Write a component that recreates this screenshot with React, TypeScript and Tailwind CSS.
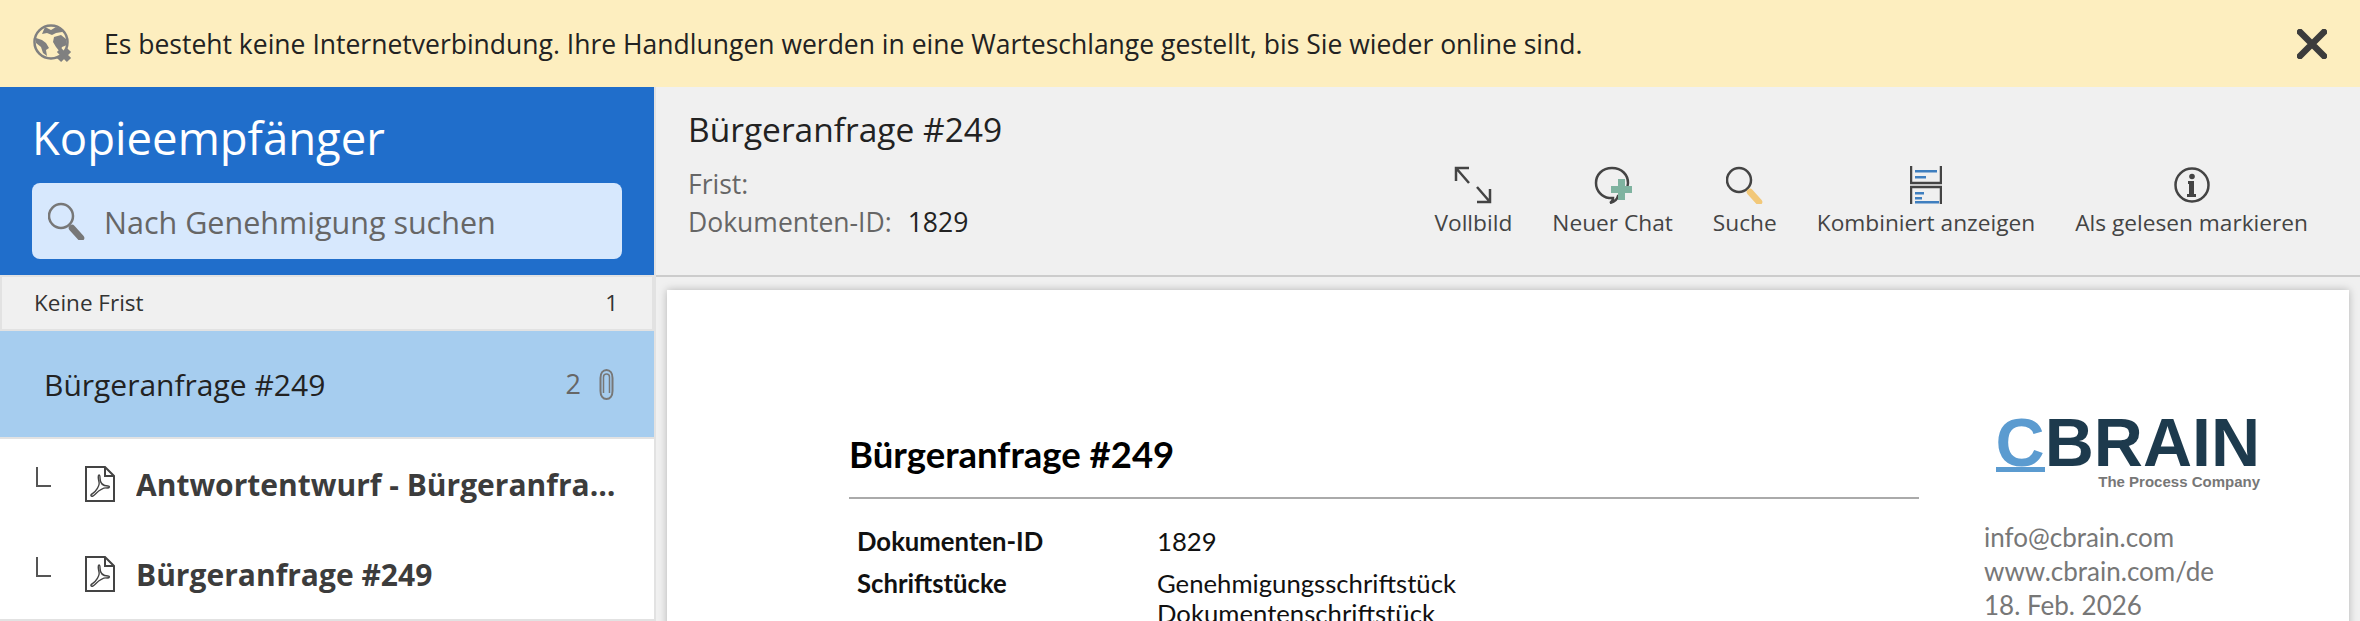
const uiFont = { fontFamily: '"Open Sans", "Noto Sans", sans-serif' };
const docFont = { fontFamily: 'Lato, "Open Sans", sans-serif' };
const logoFont = { fontFamily: '"Liberation Sans", Arial, sans-serif' };

// ---- Icons ----

function GlobeOffIcon() {
  return (
    <svg width="40" height="40" viewBox="0 0 40 40" fill="none">
      <circle cx="18" cy="18" r="16.5" fill="#fdeebf" stroke="#808080" strokeWidth="2.5" />
      <path d="M12 3l6 3 5-3 7 3-1 2-6 1-4 2-5-2-5 1zM3 14l6 2 4 3 3 5-3 2 1 6-4-3-2-6-5-4zM21 13l7-2 5 4 1 6-5 2-2 5-4-5-3-5z" fill="#808080" />
      <path d="M26 26l10 10M36 26L26 36" stroke="#808080" strokeWidth="6" />
    </svg>
  );
}

function SearchIcon({ handle, ring }: { handle: string; ring: string }) {
  return (
    <svg width="38" height="38" viewBox="0 0 38 38" fill="none">
      <circle cx="13" cy="14" r="12" stroke={ring} strokeWidth="2.5" />
      <path d="M24 26l9 10" stroke={handle} strokeWidth="6.5" strokeLinecap="round" />
    </svg>
  );
}

function PdfIcon() {
  return (
    <svg width="30" height="36" viewBox="0 0 30 36" fill="none" stroke="#444" strokeWidth="2">
      <path d="M1 1h19l9 9v25H1z" />
      <path d="M20 1v9h9" />
      <path
        d="M14 9c-1 0-1 3 0 7 1 3-3 10-7 12-2 1-1 3 1 2 3-2 8-9 14-8 3 0 3-2 1-2-6 0-8-4-8-8 0-2 0-3-1-3z"
        strokeWidth="1.4"
      />
    </svg>
  );
}

function PaperclipIcon() {
  return (
    <svg width="15" height="31" viewBox="0 0 15 31" fill="none" stroke="#777" strokeWidth="2">
      <path d="M4.500 24V8c0-2 1-3 3-3s3 1 3 3v16" strokeWidth="1.500" />
      <path d="M1.500 9c0-5 2.500-8 6-8s6 3 6 8v13c0 5-2.500 8-6 8s-6-3-6-8z" />
    </svg>
  );
}

function TreeElbow() {
  return <div className="mb-[15px] h-[20px] w-[15px] shrink-0 self-center border-b-2 border-l-2 border-[#555]" />;
}

function ExpandIcon() {
  return (
    <svg width="38" height="38" viewBox="0 0 38 38" fill="none" stroke="#444" strokeWidth="2.5">
      <path d="M2 15V2h13M2 2l13 15" />
      <path d="M36 23v13H23M36 36L23 21" />
    </svg>
  );
}

function ChatPlusIcon() {
  return (
    <svg width="38" height="38" viewBox="0 0 38 38" fill="none">
      <path
        d="M18 2C8 2 2 9 2 17c0 8 6 14 13 15 2 0 4 0 4 0 0 2-1 4-3 5 4-1 7-3 8-7 6-2 10-7 10-13C34 9 28 2 18 2z"
        stroke="#444"
        strokeWidth="2.5"
      />
      <path d="M24 13h7v7h7v7h-7v7h-7v-7h-7v-7h7z" fill="#7fb3a0" />
    </svg>
  );
}

function CombinedIcon() {
  return (
    <svg width="32" height="38" viewBox="0 0 32 38" fill="none">
      <path d="M1 0v17h30V0" stroke="#444" strokeWidth="2.5" />
      <path d="M1 38V21h30v17" stroke="#444" strokeWidth="2.5" />
      <path d="M5 4h22v2.500H5zM5 10h11v2.500H5zM5 26h9v2.500H5zM5 31h7v2.500H5zM5 35h24v2.500H5z" fill="#3f7fbf" />
    </svg>
  );
}

function InfoIcon() {
  return (
    <svg width="38" height="38" viewBox="0 0 38 38" fill="none">
      <circle cx="19" cy="19" r="16.5" stroke="#444" strokeWidth="2.5" />
      <circle cx="19" cy="10.5" r="2.8" fill="#444" />
      <path d="M15 15h6v13h2v3h-9v-3h2V18h-1z" fill="#444" />
    </svg>
  );
}

// ---- Data ----

const actions = [
  { label: "Vollbild", icon: <ExpandIcon /> },
  { label: "Neuer Chat", icon: <ChatPlusIcon /> },
  { label: "Suche", icon: <SearchIcon ring="#444" handle="#f2c879" /> },
  { label: "Kombiniert anzeigen", icon: <CombinedIcon /> },
  { label: "Als gelesen markieren", icon: <InfoIcon /> },
];

const children = ["Antwortentwurf - Bürgeranfrage #249", "Bürgeranfrage #249"];

// ---- Page ----

export default function App() {
  return (
    <div className="flex h-[621px] w-[2360px] flex-col overflow-hidden bg-[#f0f0f0]" style={uiFont}>
      {/* Offline banner */}
      <div className="flex h-[87px] shrink-0 items-center bg-[#fdeebf] pl-[33px] pr-[33px]">
        <GlobeOffIcon />
        <span className="ml-[31px] flex-1 pt-[2px] text-[26.500px] text-[#222]">
          Es besteht keine Internetverbindung. Ihre Handlungen werden in eine Warteschlange gestellt, bis Sie wieder online sind.
        </span>
        <svg width="30" height="30" viewBox="0 0 30 30">
          <path d="M3 3l24 24M27 3L3 27" stroke="#3c3c3c" strokeWidth="6.5" strokeLinecap="round" />
        </svg>
      </div>

      <div className="flex min-h-0 flex-1">
        {/* Sidebar */}
        <aside className="flex w-[654px] shrink-0 flex-col bg-white">
          <div className="h-[188px] shrink-0 bg-[#206ecb] px-[32px] pt-[20px]">
            <h1 className="text-[45.500px] leading-[60px] font-normal text-white">Kopieempfänger</h1>
            <div className="mt-[16px] flex h-[76px] w-[590px] items-center gap-[18px] rounded-[8px] bg-[#d7e8fd] pl-[16px]">
              <SearchIcon ring="#777" handle="#777" />
              <span className="pt-[3px] text-[30.500px] text-[#666]">Nach Genehmigung suchen</span>
            </div>
          </div>

          <div className="flex h-[56px] shrink-0 items-center justify-between border-x-2 border-y-2 border-[#e2e2e2] bg-[#f0f0f0] pl-[32px] pr-[34px] text-[22.500px] text-[#333]">
            <span>Keine Frist</span>
            <span>1</span>
          </div>

          <div className="flex h-[106px] shrink-0 items-center justify-between bg-[#a6cdef] pl-[44px] pr-[40px]">
            <span className="text-[30px] text-[#222]">Bürgeranfrage #249</span>
            <div className="flex items-center gap-[18px]">
              <span className="text-[27px] text-[#666]">2</span>
              <PaperclipIcon />
            </div>
          </div>

          <div className="flex min-h-0 flex-1 flex-col border-y-2 border-[#e2e2e2]">
            {children.map((name) => (
              <div key={name} className="flex h-[90px] shrink-0 items-center pl-[36px] pr-[32px]">
                <TreeElbow />
                <div className="ml-[34px] shrink-0">
                  <PdfIcon />
                </div>
                <span className="ml-[21px] truncate text-[30px] font-bold text-[#3c3c3c]">{name}</span>
              </div>
            ))}
          </div>
        </aside>

        {/* Main column */}
        <main className="flex min-w-0 flex-1 flex-col border-l-2 border-[#e2e2e2]">
          <header className="flex h-[190px] shrink-0 justify-between border-b-2 border-[#cccccc] pl-[32px] pr-[52px]">
            <div className="pt-[20px]">
              <h2 className="text-[33.500px] leading-[44px] font-normal text-[#222]">Bürgeranfrage #249</h2>
              <div className="mt-[14px] text-[26.500px] leading-[38px] text-[#666]">
                <div>Frist:</div>
                <div className="flex gap-[16px]">
                  Dokumenten-ID:
                  <span className="text-[#222]">1829</span>
                </div>
              </div>
            </div>
            <div className="flex gap-[40px] pt-[79px]">
              {actions.map((a) => (
                <div key={a.label} className="flex flex-col items-center gap-[4px]">
                  <div className="flex h-[38px] items-center">{a.icon}</div>
                  <span className="text-[22.700px] leading-[30px] text-[#444]">{a.label}</span>
                </div>
              ))}
            </div>
          </header>

          {/* Document preview */}
          <div className="min-h-0 flex-1 overflow-hidden px-[11px] pt-[13px]">
            <div className="flex h-[400px] bg-white pl-[182px] shadow-[0_0_8px_rgba(0,0,0,0.25)]" style={docFont}>
              <div className="w-[1070px] shrink-0 pt-[142px]">
                <h3 className="h-[67px] border-b-2 border-[#aaaaaa] text-[36.500px] leading-[44px] font-bold text-black">Bürgeranfrage #249</h3>
                <div className="mt-[27px] grid grid-cols-[300px_1fr] pl-[8px] text-[25.700px] leading-[30px] text-[#111]">
                  <span className="font-bold">Dokumenten-ID</span>
                  <span>1829</span>
                  <span className="mt-[12px] font-bold">Schriftstücke</span>
                  <span className="mt-[12px]">Genehmigungsschriftstück</span>
                  <span />
                  <span>Dokumentenschriftstück</span>
                </div>
              </div>
              <div className="ml-[65px] pt-[127px] text-[26px] leading-[34px] text-[#777]">
                <div className="flex w-[276px] flex-col items-end">
                  <div className="flex items-start" style={logoFont}>
                    <span className="border-b-[5px] border-[#5b9bd0] text-[68px] leading-[50px] font-bold text-[#5b9bd0]">C</span>
                    <span className="text-[68px] leading-[50px] font-bold text-[#1d3a4d]">BRAIN</span>
                  </div>
                  <span className="mt-[1px] text-[15px] leading-[18px] font-bold text-[#777]" style={logoFont}>The Process Company</span>
                </div>
                <div className="mt-[29px]">info@cbrain.com</div>
                <div>www.cbrain.com/de</div>
                <div>18. Feb. 2026</div>
              </div>
            </div>
          </div>
        </main>
      </div>
    </div>
  );
}
